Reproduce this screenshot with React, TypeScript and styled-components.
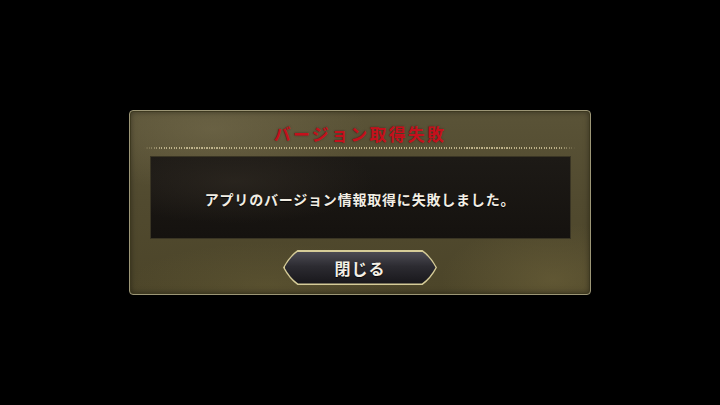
import React from "react";
import styled, { createGlobalStyle } from "styled-components";

const Global = createGlobalStyle`
  html, body { margin: 0; padding: 0; background: #000; }
  body { width: 720px; height: 405px; overflow: hidden; }
  #root { width: 720px; height: 405px; }
`;

const Screen = styled.div`
  width: 720px;
  height: 405px;
  background: #000;
  display: flex;
  align-items: center;
  justify-content: center;
  font-family: "Noto Sans CJK JP", "Noto Sans", sans-serif;
`;

const Panel = styled.div`
  width: 460px;
  height: 183px;
  border: 1px solid #9c9676;
  border-radius: 4px;
  box-shadow: inset 0 0 0 1px #3e3920, inset 0 0 6px rgba(0,0,0,0.5);
  background:
    radial-gradient(ellipse 220px 90px at 18% 10%, rgba(130,120,88,0.4), rgba(130,120,88,0) 70%),
    radial-gradient(ellipse 160px 80px at 92% 92%, rgba(125,112,66,0.4), rgba(125,112,66,0) 70%),
    radial-gradient(ellipse 200px 60px at 30% 95%, rgba(115,104,60,0.3), rgba(115,104,60,0) 70%),
    linear-gradient(180deg, #5a5337 0%, #514a2f 50%, #4c4529 100%);
  display: flex;
  flex-direction: column;
  align-items: center;
  box-sizing: content-box;
`;

const Title = styled.div`
  height: 36px;
  display: flex;
  align-items: center;
  justify-content: center;
  padding-top: 8px;
  box-sizing: border-box;
  font-size: 17px;
  font-weight: 700;
  letter-spacing: 2.2px;
  color: #c4101c;
  text-shadow: 0 0 2px rgba(40, 0, 0, 0.5);
`;

const Dotted = styled.div`
  width: 432px;
  height: 2px;
  background: repeating-linear-gradient(90deg, #cfc39a 0 1px, transparent 1px 2.5px);
  opacity: 0.85;
  -webkit-mask-image: linear-gradient(90deg, transparent 0, #000 18px, #000 calc(100% - 18px), transparent 100%);
  mask-image: linear-gradient(90deg, transparent 0, #000 18px, #000 calc(100% - 18px), transparent 100%);
`;

const MessageBox = styled.div`
  margin-top: 7px;
  width: 419px;
  height: 81px;
  border: 1px solid #3a3524;
  background:
    radial-gradient(ellipse 200px 60px at 20% 30%, rgba(50,44,36,0.6), rgba(50,44,36,0) 70%),
    linear-gradient(180deg, #1d1a16 0%, #15120f 100%);
  display: flex;
  align-items: center;
  justify-content: center;
  box-sizing: content-box;
`;

const Message = styled.div`
  font-size: 14px;
  font-weight: 700;
  letter-spacing: 0.8px;
  color: #f2eee4;
  margin-top: 2px;
  text-shadow: 0 1px 1px rgba(0,0,0,0.8);
`;

const ButtonOuter = styled.button`
  margin-top: 11px;
  width: 154px;
  height: 35px;
  padding: 1.5px;
  border: none;
  background: #d6cc98;
  clip-path: path("M0 17.5 Q6 6 14.5 0 L139.5 0 Q148 6 154 17.5 Q148 29 139.5 35 L14.5 35 Q6 29 0 17.5 Z");
  cursor: pointer;
  box-sizing: border-box;
  display: flex;
`;

const ButtonInner = styled.span`
  flex: 1;
  display: flex;
  align-items: center;
  justify-content: center;
  background: linear-gradient(180deg, #4c4b53 0%, #2c2b31 45%, #18171b 100%);
  clip-path: path("M0 16 Q5.6 5.5 13.6 0 L137.4 0 Q145.4 5.5 151 16 Q145.4 26.5 137.4 32 L13.6 32 Q5.6 26.5 0 16 Z");
  font-family: "Noto Sans CJK JP", "Noto Sans", sans-serif;
  font-size: 16px;
  font-weight: 700;
  letter-spacing: 1px;
  color: #f4f0e6;
  text-shadow: 0 1px 1px rgba(0,0,0,0.8);
`;

export default function App() {
  return (
    <Screen>
      <Global />
      <Panel>
        <Title>バージョン取得失敗</Title>
        <Dotted />
        <MessageBox>
          <Message>アプリのバージョン情報取得に失敗しました。</Message>
        </MessageBox>
        <ButtonOuter>
          <ButtonInner>閉じる</ButtonInner>
        </ButtonOuter>
      </Panel>
    </Screen>
  );
}
